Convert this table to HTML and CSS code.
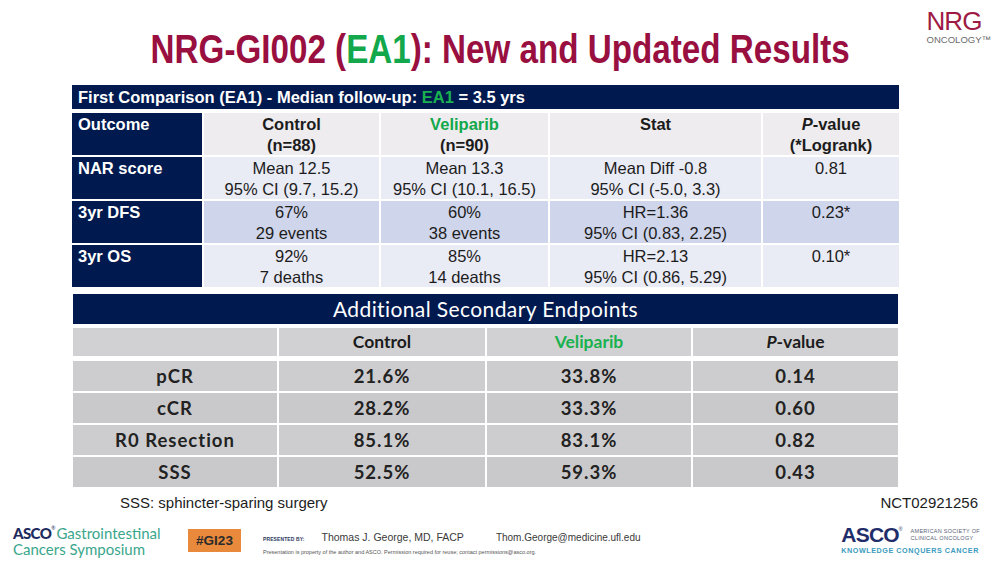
FILE: index.html
```html
<!DOCTYPE html>
<html lang="en">
<head>
<meta charset="utf-8">
<title>NRG-GI002 (EA1): New and Updated Results</title>
<link rel="stylesheet" href="styles.css">
</head>
<body>
<div class="slide">
  <header class="top">
    <h1 class="title"><span class="title-text">NRG-GI002 (<span class="green">EA1</span>): New and Updated Results</span></h1>
    <div class="nrg">
      <div class="nrg-mark">NRG</div>
      <div class="nrg-sub">ONCOLOGY™</div>
    </div>
  </header>

  <section class="t1">
    <div class="t1-bar">First Comparison (EA1) - Median follow-up: <span class="green">EA1</span> = 3.5 yrs</div>
    <div class="t1-grid">
      <div class="c lab">Outcome</div>
      <div class="c hd">Control<br>(n=88)</div>
      <div class="c hd"><span class="green">Veliparib</span><br>(n=90)</div>
      <div class="c hd">Stat</div>
      <div class="c hd"><i>P</i>-value<br>(*Logrank)</div>

      <div class="c lab">NAR score</div>
      <div class="c lt">Mean 12.5<br>95% CI (9.7, 15.2)</div>
      <div class="c lt">Mean 13.3<br>95% CI (10.1, 16.5)</div>
      <div class="c lt">Mean Diff -0.8<br>95% CI (-5.0, 3.3)</div>
      <div class="c lt">0.81</div>

      <div class="c lab">3yr DFS</div>
      <div class="c dk">67%<br>29 events</div>
      <div class="c dk">60%<br>38 events</div>
      <div class="c dk">HR=1.36<br>95% CI (0.83, 2.25)</div>
      <div class="c dk">0.23*</div>

      <div class="c lab">3yr OS</div>
      <div class="c lt">92%<br>7 deaths</div>
      <div class="c lt">85%<br>14 deaths</div>
      <div class="c lt">HR=2.13<br>95% CI (0.86, 5.29)</div>
      <div class="c lt">0.10*</div>
    </div>
  </section>

  <section class="t2">
    <div class="t2-bar">Additional Secondary Endpoints</div>
    <div class="t2-head">
      <div class="h2"></div>
      <div class="h2">Control</div>
      <div class="h2 green">Veliparib</div>
      <div class="h2"><i>P</i>-value</div>
    </div>
    <div class="t2-rows">
      <div class="d odd">pCR</div><div class="d odd">21.6%</div><div class="d odd">33.8%</div><div class="d odd">0.14</div>
      <div class="d even">cCR</div><div class="d even">28.2%</div><div class="d even">33.3%</div><div class="d even">0.60</div>
      <div class="d odd">R0 Resection</div><div class="d odd">85.1%</div><div class="d odd">83.1%</div><div class="d odd">0.82</div>
      <div class="d even">SSS</div><div class="d even">52.5%</div><div class="d even">59.3%</div><div class="d even">0.43</div>
    </div>
  </section>

  <div class="notes">
    <span>SSS: sphincter-sparing surgery</span>
    <span>NCT02921256</span>
  </div>

  <footer class="foot">
    <div class="gi-logo">
      <div class="gi-line"><span class="gi-asco">ASCO</span><span class="reg">®</span><span class="gi-word">Gastrointestinal</span></div>
      <div class="gi-line">Cancers Symposium</div>
    </div>
    <div class="tag">#GI23</div>
    <div class="presenter">
      <div class="p-line">
        <span class="p-by">PRESENTED BY:</span>
        <span class="p-name">Thomas J. George, MD, FACP</span>
        <span class="p-mail">Thom.George@medicine.ufl.edu</span>
      </div>
      <div class="p-legal">Presentation is property of the author and ASCO. Permission required for reuse; contact permissions@asco.org.</div>
    </div>
    <div class="asco">
      <div class="asco-top">
        <span class="asco-mark">ASCO</span><span class="asco-reg">®</span>
        <span class="asco-name">AMERICAN SOCIETY OF<br>CLINICAL ONCOLOGY</span>
      </div>
      <div class="asco-tag">KNOWLEDGE CONQUERS CANCER</div>
    </div>
  </footer>
</div>
</body>
</html>
```

FILE: styles.css
```css
* { box-sizing: border-box; margin: 0; padding: 0; }

body {
  margin: 0;
  background: #ffffff;
  font-family: "Liberation Sans", Arial, sans-serif;
  color: #1c1c1c;
}

.slide {
  width: 1000px;
  height: 563px;
  display: flex;
  flex-direction: column;
  overflow: hidden;
}

.green { color: #12A84B; }

/* ---------- header ---------- */
.top {
  display: grid;
  grid-template-columns: 1fr auto 1fr;
  height: 85px;
}

.title {
  grid-column: 2;
  width: 700px;
  display: flex;
  justify-content: center;
  font-family: "Liberation Sans", Arial, sans-serif;
  font-weight: 700;
  font-size: 40px;
  line-height: 1;
  color: #990F3F;
  padding-top: 29px;
  white-space: nowrap;
}

.title-text {
  display: inline-block;
  transform: scaleX(0.83);
  transform-origin: center top;
}

.nrg {
  grid-column: 3;
  justify-self: end;
  padding: 8px 9px 0 0;
  display: flex;
  flex-direction: column;
}

.nrg-mark {
  font-size: 26px;
  line-height: 26px;
  color: #9E1A44;
  letter-spacing: -1px;
}

.nrg-sub {
  font-size: 9.5px;
  line-height: 11px;
  color: #6b6b6b;
  letter-spacing: 0;
}

/* ---------- first table ---------- */
.t1 {
  margin-left: 72px;
  width: 827px;
}

.t1-bar {
  height: 24px;
  background: #00194F;
  color: #ffffff;
  font-weight: 700;
  font-size: 16.5px;
  line-height: 24px;
  padding-left: 6px;
  white-space: nowrap;
}

.t1-bar .green { color: #19B24F; }

.t1-grid {
  margin-top: 4px;
  display: grid;
  grid-template-columns: 130px 175px 167px 211px 136px;
  grid-auto-rows: 42px;
  gap: 2px;
}

.c {
  font-size: 16.5px;
  line-height: 21px;
  padding-top: 1px;
  text-align: center;
  white-space: nowrap;
  color: #1c1c1c;
}

.lab {
  background: #00194F;
  color: #ffffff;
  font-weight: 700;
  text-align: left;
  padding-left: 6px;
}

.hd {
  background: #EEECEE;
  font-weight: 700;
}

.lt { background: #E9EBF5; }
.dk { background: #CFD5EA; }

/* ---------- second table ---------- */
.t2 {
  margin-top: 7px;
  margin-left: 73px;
  width: 825px;
  font-family: Lato, "Open Sans", sans-serif;
}

.t2-bar {
  height: 30px;
  background: #00194F;
  color: #ffffff;
  font-size: 21px;
  line-height: 30px;
  text-align: center;
  letter-spacing: 0.4px;
}

.t2-head,
.t2-rows {
  display: grid;
  grid-template-columns: 204px 206px 204px 205px;
  gap: 2px;
}

.t2-head {
  margin-top: 4px;
  grid-auto-rows: 28px;
}

.t2-rows {
  margin-top: 5px;
  grid-auto-rows: 30px;
}

.h2 {
  background: #D1D1D3;
  font-weight: 700;
  font-size: 17.5px;
  line-height: 28px;
  text-align: center;
  color: #1c1c1c;
}

.h2.green { color: #19B24F; }

.d {
  font-weight: 700;
  font-size: 18.5px;
  line-height: 30px;
  text-align: center;
  letter-spacing: 1px;
  color: #222222;
}

.odd { background: #CDCDCF; }
.even { background: #C9C9CB; }

/* ---------- notes ---------- */
.notes {
  margin-top: 7px;
  display: flex;
  justify-content: space-between;
  padding: 0 22px 0 120px;
  font-size: 15px;
  line-height: 18px;
  color: #1c1c1c;
}

/* ---------- footer ---------- */
.foot {
  flex: 1;
  display: flex;
  align-items: center;
  padding: 6px 20px 0 13px;
}

.gi-logo {
  width: 153px;
  font-family: Lato, "Open Sans", sans-serif;
  color: #3AA68C;
  font-size: 15px;
  line-height: 16px;
  white-space: nowrap;
}

.gi-line {
  display: flex;
  align-items: flex-start;
}

.gi-asco {
  color: #1D2B5E;
  font-weight: 900;
  letter-spacing: -0.6px;
}

.reg {
  font-size: 5px;
  line-height: 6px;
  color: #1D2B5E;
}

.gi-word {
  margin-left: 1px;
  letter-spacing: 0;
}

.tag {
  margin-left: 22px;
  width: 53px;
  height: 23px;
  background: #E8893B;
  color: #2b2b2b;
  font-weight: 700;
  font-size: 13.5px;
  line-height: 23px;
  text-align: center;
}

.presenter {
  margin-left: 22px;
  margin-top: 4px;
  display: flex;
  flex-direction: column;
  gap: 6px;
}

.p-line {
  display: flex;
  align-items: baseline;
  white-space: nowrap;
}

.p-by {
  font-size: 5px;
  font-weight: 700;
  letter-spacing: 0.1px;
  color: #2d3a5e;
}

.p-name {
  margin-left: 17px;
  font-size: 10.5px;
  color: #3a3a3a;
}

.p-mail {
  margin-left: 32px;
  font-size: 10px;
  color: #3a3a3a;
}

.p-legal {
  font-size: 5.5px;
  color: #555555;
  white-space: nowrap;
}

.asco {
  margin-left: auto;
  display: flex;
  flex-direction: column;
  gap: 2px;
}

.asco-top {
  display: flex;
  align-items: center;
}

.asco-mark {
  font-weight: 700;
  font-size: 21px;
  line-height: 18px;
  color: #1F2E6A;
  letter-spacing: -0.8px;
}

.asco-reg {
  font-size: 5px;
  line-height: 6px;
  color: #1F2E6A;
  align-self: flex-start;
}

.asco-name {
  margin-left: 8px;
  font-size: 5.5px;
  line-height: 7px;
  color: #5a6078;
  letter-spacing: 0.3px;
}

.asco-tag {
  font-size: 7.2px;
  font-weight: 700;
  color: #3A9BBE;
  letter-spacing: 0.55px;
  white-space: nowrap;
}
```
